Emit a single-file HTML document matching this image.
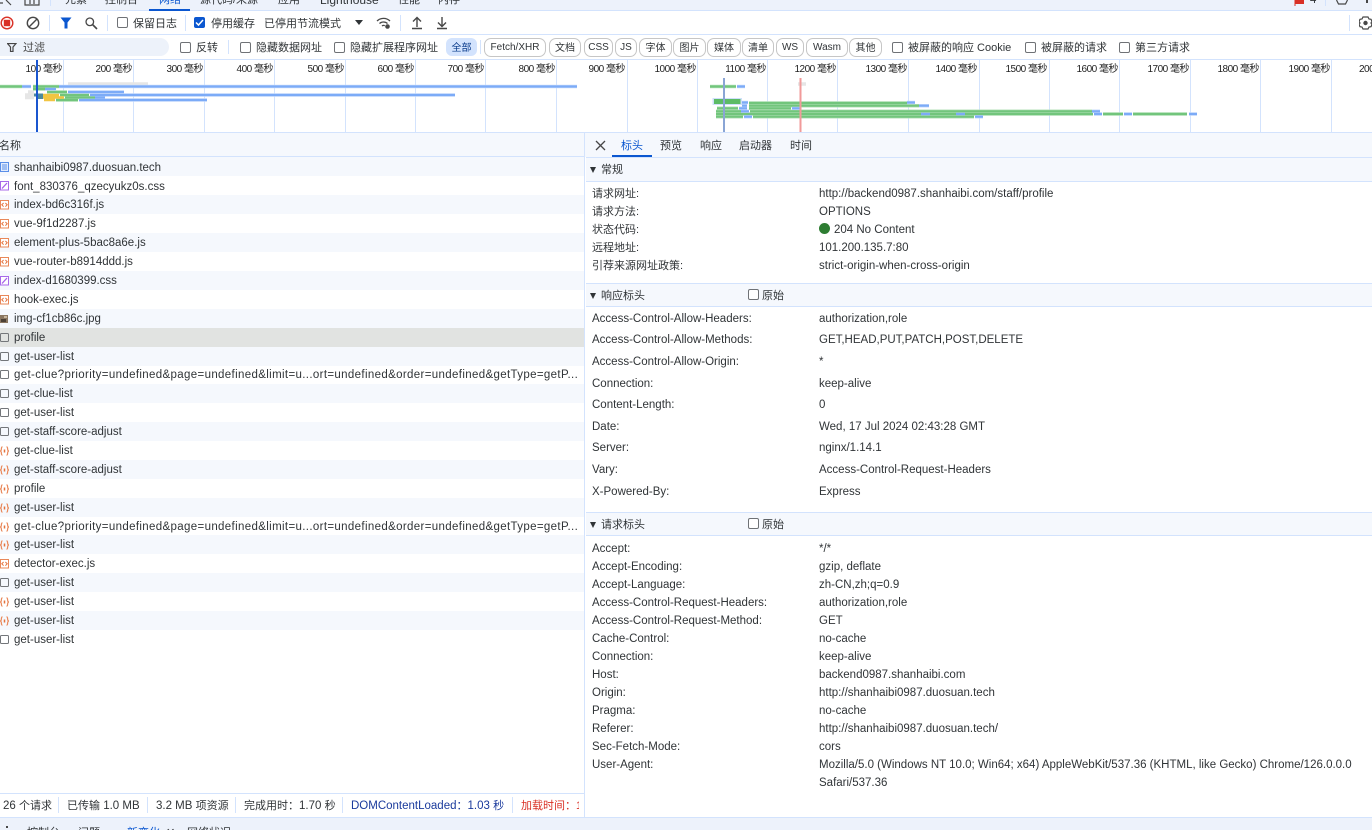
<!DOCTYPE html>
<html lang="zh-CN"><head><meta charset="utf-8"><title>Network</title>
<style>
html,body{margin:0;padding:0;background:#fff}
#a{position:relative;width:1372px;height:830px;overflow:hidden;background:#fff;font:11.5px/14px "Liberation Sans","Noto Sans CJK SC",sans-serif;color:#303437}
.t{position:absolute;white-space:pre;line-height:16px}
.c{font-size:11px;line-height:14px}
i.z{font-style:normal;font-size:11px}
.b{position:absolute}
.cb{position:absolute;width:9px;height:9px;border:1px solid #6f7276;border-radius:2px;background:#fff}
.sp{position:absolute;width:1px;background:#d3e3fd}
.chip{position:absolute;top:38px;height:17px;border:1px solid #c6c6c6;border-radius:7px;text-align:center;line-height:18px;font-size:10px;box-sizing:content-box;background:#fff;white-space:pre}
.gl{position:absolute;top:60px;height:72px;width:1px;background:#d3e3fd}
.tk{position:absolute;top:63px;width:60px;text-align:right;white-space:pre;line-height:14px;font-size:10px;letter-spacing:-.5px;color:#1f1f1f}
.r{position:absolute;left:0;width:584px;height:19px}
.r svg{position:absolute;left:0;top:5px}
.r span{position:absolute;left:14px;top:3px;white-space:pre;line-height:14px}
.o{background:#f5f8fd}
.sec{position:absolute;left:586px;right:0;height:24px;background:#f5f8fd;border-top:1px solid #d3e3fd;border-bottom:1px solid #d3e3fd;box-sizing:border-box}
.tri{position:absolute;left:590px;width:0;height:0;border-left:3.5px solid transparent;border-right:3.5px solid transparent;border-top:6px solid #303437}
</style></head><body><div id="a">
<svg width="0" height="0" style="position:absolute"><defs>
<symbol id="doc" viewBox="0 0 9 10"><rect x=".5" y=".5" width="8" height="9" fill="#e3edfd" stroke="#5b8fe8"/><path d="M2 3h5M2 5h5M2 7h5" stroke="#5b8fe8"/></symbol>
<symbol id="css" viewBox="0 0 9 10"><rect x=".5" y=".5" width="8" height="8.500" fill="#fff" stroke="#a86bea"/><path d="M2 7.500L7 2" stroke="#a45ee8" stroke-width="1.300"/></symbol>
<symbol id="js" viewBox="0 0 9 10"><rect x=".5" y=".5" width="8" height="8.500" fill="#fff" stroke="#e9885a"/><path d="M3.600 3L1.800 4.800l1.800 1.800M5.400 3l1.800 1.800-1.800 1.800" fill="none" stroke="#e5723c"/></symbol>
<symbol id="em" viewBox="0 0 9 10"><rect x=".5" y=".5" width="8" height="8" rx="1" fill="none" stroke="#73767a"/></symbol>
<symbol id="fe" viewBox="0 0 9 10"><path d="M2.500 .8C1 .8 1.600 3 1.200 4c-.2.600-.8 1-.8 1s.6.400.8 1c.4 1-.2 3.200 1.300 3.200M6.500 .8C8 .8 7.400 3 7.800 4c.2.600.8 1 .8 1s-.6.400-.8 1c-.4 1 .2 3.200-1.300 3.200" fill="none" stroke="#e9885a" stroke-width="1.200"/><path d="M4.500 3.500v3" stroke="#e5723c" stroke-width="1.500"/></symbol>
</defs></svg>

<!-- top tabs -->
<div class="b" style="left:0;top:0;width:1372px;height:11px;background:#edf2fb;border-bottom:1px solid #d3e3fd;box-sizing:border-box;overflow:hidden">
<span class="t c" style="left:65px;top:-7px">元素</span>
<span class="t c" style="left:105px;top:-7px">控制台</span>
<span class="t c" style="left:159px;top:-7px;color:#0b57d0">网络</span>
<span class="t c" style="left:200px;top:-7px">源代码/来源</span>
<span class="t c" style="left:278px;top:-7px">应用</span>
<span class="t" style="left:320px;top:-8px;font-size:12px">Lighthouse</span>
<span class="t c" style="left:398px;top:-7px">性能</span>
<span class="t c" style="left:438px;top:-7px">内存</span>
<span class="t" style="left:1310px;top:-8px">4</span>
</div>
<div class="b" style="left:149px;top:9px;width:41px;height:2px;background:#0b57d0"></div>
<svg class="b" style="left:0;top:0" width="60" height="10"><path d="M0 3h3M6 0l5 5M25 0v5h14V0M30 0v4M34 0v4" stroke="#474747" stroke-width="1.200" fill="none"/></svg>
<div class="sp" style="left:50px;top:0;height:6px"></div>
<svg class="b" style="left:1294px;top:0" width="12" height="6"><rect x="1" y="0" width="9" height="4" fill="#d93025"/><path d="M1 0v6" stroke="#d93025"/></svg>
<div class="sp" style="left:1325px;top:0;height:6px"></div>
<svg class="b" style="left:1335px;top:0" width="14" height="6"><path d="M1.500 0l2 4h7l2-4" stroke="#474747" stroke-width="1.200" fill="none"/></svg>
<div class="b" style="left:1366px;top:0;width:2px;height:3px;background:#474747"></div>

<!-- toolbar -->
<div class="b" style="left:0;top:34px;width:1372px;height:1px;background:#d3e3fd"></div>
<svg class="b" style="left:0;top:15px" width="15" height="16"><circle cx="7" cy="8" r="5.800" fill="none" stroke="#d93025" stroke-width="1.400"/><rect x="3.800" y="4.800" width="6.400" height="6.400" fill="#d93025"/></svg>
<svg class="b" style="left:26px;top:16px" width="14" height="14"><circle cx="7" cy="7" r="5.700" fill="none" stroke="#474747" stroke-width="1.400"/><path d="M3 11L11 3" stroke="#474747" stroke-width="1.400"/></svg>
<div class="sp" style="left:49px;top:15px;height:16px"></div>
<svg class="b" style="left:60px;top:17px" width="13" height="12"><path d="M.5 .5h11L7.500 5.500V11.500H4.500V5.500z" fill="#0b57d0"/></svg>
<svg class="b" style="left:84px;top:16px" width="14" height="14"><circle cx="5.800" cy="5.800" r="3.800" fill="none" stroke="#474747" stroke-width="1.300"/><path d="M8.500 8.500l4.500 4.500" stroke="#474747" stroke-width="1.600"/></svg>
<div class="sp" style="left:107px;top:15px;height:16px"></div>
<div class="cb" style="left:117px;top:17px"></div>
<span class="t c" style="left:133px;top:17px">保留日志</span>
<div class="sp" style="left:185px;top:15px;height:16px"></div>
<div class="b" style="left:194px;top:17px;width:11px;height:11px;background:#0b57d0;border-radius:2px"></div>
<svg class="b" style="left:194px;top:17px" width="11" height="11"><path d="M2 5.500l2.500 2.500L9 3" fill="none" stroke="#fff" stroke-width="1.500"/></svg>
<span class="t c" style="left:211px;top:17px">停用缓存</span>
<span class="t c" style="left:264px;top:17px">已停用节流模式</span>
<div class="b" style="left:355px;top:20px;width:0;height:0;border-left:4px solid transparent;border-right:4px solid transparent;border-top:5px solid #303437"></div>
<svg class="b" style="left:376px;top:16px" width="16" height="14"><path d="M1 5c3.500-3.500 9.500-3.500 13 0M3.500 7.500c2.200-2 5.800-2 8 0M6 10c.8-.6 2-.7 2.800-.3" fill="none" stroke="#474747" stroke-width="1.300"/><circle cx="11.500" cy="10.500" r="2.300" fill="#474747"/></svg>
<div class="sp" style="left:400px;top:15px;height:16px"></div>
<svg class="b" style="left:411px;top:16px" width="12" height="14"><path d="M6 11V2M2 5.500L6 1.500l4 4M1 12.500h10" fill="none" stroke="#474747" stroke-width="1.400"/></svg>
<svg class="b" style="left:436px;top:16px" width="12" height="14"><path d="M6 1v9M2 6.500l4 4 4-4M1 12.500h10" fill="none" stroke="#474747" stroke-width="1.400"/></svg>
<div class="sp" style="left:1349px;top:15px;height:16px"></div>
<svg class="b" style="left:1359px;top:16px" width="13" height="14"><path d="M4 1h5l1 2 2 .3 1 2-1 1.700 1 1.700-1 2-2 .3-1 2H4l-1-2-2-.3-1-2 1-1.700-1-1.700 1-2 2-.3z" fill="none" stroke="#474747" stroke-width="1.200"/><circle cx="6.500" cy="7" r="2.200" fill="#474747"/></svg>

<!-- filter row -->
<div class="b" style="left:0;top:59px;width:1372px;height:1px;background:#d3e3fd"></div>
<div class="b" style="left:-10px;top:38px;width:179px;height:18px;background:#edf2fa;border-radius:9px"></div>
<svg class="b" style="left:7px;top:43px" width="10" height="9"><path d="M.5 .5h8.500L6 4v4.500H3.500V4z" fill="none" stroke="#474747" stroke-width="1.200"/></svg>
<span class="t c" style="left:23px;top:41px;color:#474747">过滤</span>
<div class="cb" style="left:180px;top:42px"></div><span class="t c" style="left:196px;top:41px">反转</span>
<div class="sp" style="left:228px;top:40px;height:14px"></div>
<div class="cb" style="left:240px;top:42px"></div><span class="t c" style="left:256px;top:41px">隐藏数据网址</span>
<div class="cb" style="left:334px;top:42px"></div><span class="t c" style="left:350px;top:41px">隐藏扩展程序网址</span>
<div class="b" style="left:446px;top:38px;width:31px;height:18px;background:#d3e3fd;border-radius:6px;text-align:center;line-height:21px;font-size:10px;color:#0b3c8c">全部</div>
<div class="sp" style="left:480px;top:40px;height:14px"></div>
<div class="chip" style="left:484px;width:60px">Fetch/XHR</div>
<div class="chip" style="left:549px;width:30px;line-height:19px">文档</div>
<div class="chip" style="left:584px;width:27px">CSS</div>
<div class="chip" style="left:615px;width:20px">JS</div>
<div class="chip" style="left:639px;width:31px;line-height:19px">字体</div>
<div class="chip" style="left:673px;width:31px;line-height:19px">图片</div>
<div class="chip" style="left:707px;width:32px;line-height:19px">媒体</div>
<div class="chip" style="left:742px;width:30px;line-height:19px">清单</div>
<div class="chip" style="left:776px;width:26px">WS</div>
<div class="chip" style="left:806px;width:40px">Wasm</div>
<div class="chip" style="left:849px;width:31px;line-height:19px">其他</div>
<div class="cb" style="left:892px;top:42px"></div><span class="t c" style="left:908px;top:41px">被屏蔽的响应 Cookie</span>
<div class="cb" style="left:1025px;top:42px"></div><span class="t c" style="left:1041px;top:41px">被屏蔽的请求</span>
<div class="cb" style="left:1119px;top:42px"></div><span class="t c" style="left:1135px;top:41px">第三方请求</span>

<!-- timeline -->
<div class="gl" style="left:63px"></div><div class="gl" style="left:133px"></div><div class="gl" style="left:204px"></div><div class="gl" style="left:274px"></div><div class="gl" style="left:345px"></div><div class="gl" style="left:415px"></div><div class="gl" style="left:485px"></div><div class="gl" style="left:556px"></div><div class="gl" style="left:627px"></div><div class="gl" style="left:697px"></div><div class="gl" style="left:767px"></div><div class="gl" style="left:837px"></div><div class="gl" style="left:908px"></div><div class="gl" style="left:979px"></div><div class="gl" style="left:1049px"></div><div class="gl" style="left:1119px"></div><div class="gl" style="left:1190px"></div><div class="gl" style="left:1260px"></div><div class="gl" style="left:1331px"></div>
<span class="tk" style="left:2px">100 毫秒</span><span class="tk" style="left:72px">200 毫秒</span><span class="tk" style="left:143px">300 毫秒</span><span class="tk" style="left:213px">400 毫秒</span><span class="tk" style="left:284px">500 毫秒</span><span class="tk" style="left:354px">600 毫秒</span><span class="tk" style="left:424px">700 毫秒</span><span class="tk" style="left:495px">800 毫秒</span><span class="tk" style="left:565px">900 毫秒</span><span class="tk" style="left:636px">1000 毫秒</span><span class="tk" style="left:706px">1100 毫秒</span><span class="tk" style="left:776px">1200 毫秒</span><span class="tk" style="left:847px">1300 毫秒</span><span class="tk" style="left:917px">1400 毫秒</span><span class="tk" style="left:987px">1500 毫秒</span><span class="tk" style="left:1058px">1600 毫秒</span><span class="tk" style="left:1129px">1700 毫秒</span><span class="tk" style="left:1199px">1800 毫秒</span><span class="tk" style="left:1270px">1900 毫秒</span><span class="tk" style="left:1359px;width:auto">200</span>
<svg class="b" style="left:0;top:60px" width="1372" height="72">
<g stroke-width="3.500" fill="none">
<g stroke="#e6e6e6"><path d="M68 24h80M25 35h9M25 37.500h9M28 32h6M798 24h8"/></g>
<g stroke="#b5e1b9"><path d="M0 26.500h22M33 26.500h26M33 29h12M47 32h20M60 35h29M65 37.500h30M56 40h22M710 26.500h26M749 43h158M749 45.700h170M717 48.300h21M749 48.300h42M716 51.300h25M750 51.300h342M716 54h377M1103 54h20M1133 54h54M716 56.700h27M753 56.700h221"/></g>
<g stroke="#c7dbfc"><path d="M22 26.500h9M59 26.500h518M45 29h11M68 32h56M90 35h365M95 37.500h10M79 40h128M737 26.500h8M741 42.500h7M907 42.500h8M742 45.700h5M919 45.700h10M739 48.300h8M792 48.300h8M741 51.300h8M1092 51.300h8M921 54h9M956 54h9M1094 54h8M1124 54h8M1189 54h8M744 56.700h8M975 56.700h8"/></g>
</g>
<g stroke-width="2.200" fill="none">
<g stroke="#72c57c"><path d="M0 26.500h22M33 26.500h26M33 29h12M47 32h20M60 35h29M65 37.500h30M56 40h22M710 26.500h26M749 43h158M749 45.700h170M717 48.300h21M749 48.300h42M716 51.300h25M750 51.300h342M716 54h377M1103 54h20M1133 54h54M716 56.700h27M753 56.700h221"/></g>
<g stroke="#7cabf7"><path d="M22 26.500h9M59 26.500h518M45 29h11M68 32h56M90 35h365M95 37.500h10M79 40h128M737 26.500h8M741 42.500h7M907 42.500h8M742 45.700h5M919 45.700h10M739 48.300h8M792 48.300h8M741 51.300h8M1092 51.300h8M921 54h9M956 54h9M1094 54h8M1124 54h8M1189 54h8M744 56.700h8M975 56.700h8"/></g>
</g>
<path d="M34 35h9M36 37.500h7" stroke="#4d8a9c" stroke-width="3"/>
<path d="M43 35h16M43 37.500h21M44 40h11" stroke="#f1c542" stroke-width="2.500"/>
<rect x="712.500" y="38" width="29.500" height="7" fill="#cfe0fb"/><rect x="714" y="39" width="26.500" height="5" fill="#5cbb66"/>
<rect x="36" y="0" width="2" height="72" fill="#1a56cf"/>
<rect x="723" y="18" width="2" height="54" fill="#8aa5d5"/>
<rect x="799.500" y="18" width="2" height="54" fill="#f19a9a"/>
</svg>
<div class="b" style="left:0;top:132px;width:1372px;height:1px;background:#d3e3fd"></div>

<!-- left header -->
<div class="b" style="left:0;top:133px;width:584px;height:23px;background:#f5f8fd;border-bottom:1px solid #d3e3fd"></div>
<span class="t c" style="left:-1px;top:139px">名称</span>
<div class="b" style="left:584px;top:132px;width:1px;height:685px;background:#d3e3fd"></div>

<!-- rows -->
<div class="r o" style="top:157px"><svg width="9" height="10"><use href="#doc"/></svg><span style="top:4px">shanhaibi0987.duosuan.tech</span></div>
<div class="r" style="top:176px"><svg width="9" height="10"><use href="#css"/></svg><span style="top:4px">font_830376_qzecyukz0s.css</span></div>
<div class="r o" style="top:195px"><svg width="9" height="10"><use href="#js"/></svg><span>index-bd6c316f.js</span></div>
<div class="r" style="top:214px"><svg width="9" height="10"><use href="#js"/></svg><span>vue-9f1d2287.js</span></div>
<div class="r o" style="top:233px"><svg width="9" height="10"><use href="#js"/></svg><span>element-plus-5bac8a6e.js</span></div>
<div class="r" style="top:252px"><svg width="9" height="10"><use href="#js"/></svg><span>vue-router-b8914ddd.js</span></div>
<div class="r o" style="top:271px"><svg width="9" height="10"><use href="#css"/></svg><span>index-d1680399.css</span></div>
<div class="r" style="top:290px"><svg width="9" height="10"><use href="#js"/></svg><span>hook-exec.js</span></div>
<div class="r o" style="top:309px"><svg width="9" height="10"><rect width="8" height="8" y="1" fill="#8a7660"/><rect x="1" y="5" width="5" height="3" fill="#4b4036"/><rect x="4" y="2" width="3" height="2" fill="#c9b79f"/></svg><span>img-cf1cb86c.jpg</span></div>
<div class="r" style="top:328px;background:#e1e3e1"><svg width="9" height="10"><use href="#em"/></svg><span>profile</span></div>
<div class="r o" style="top:347px"><svg width="9" height="10"><use href="#em"/></svg><span>get-user-list</span></div>
<div class="r" style="top:365px"><svg width="9" height="10"><use href="#em"/></svg><span style="letter-spacing:.35px">get-clue?priority=undefined&amp;page=undefined&amp;limit=u...ort=undefined&amp;order=undefined&amp;getType=getP...</span></div>
<div class="r o" style="top:384px"><svg width="9" height="10"><use href="#em"/></svg><span>get-clue-list</span></div>
<div class="r" style="top:403px"><svg width="9" height="10"><use href="#em"/></svg><span>get-user-list</span></div>
<div class="r o" style="top:422px"><svg width="9" height="10"><use href="#em"/></svg><span>get-staff-score-adjust</span></div>
<div class="r" style="top:441px"><svg width="9" height="10"><use href="#fe"/></svg><span>get-clue-list</span></div>
<div class="r o" style="top:460px"><svg width="9" height="10"><use href="#fe"/></svg><span>get-staff-score-adjust</span></div>
<div class="r" style="top:479px"><svg width="9" height="10"><use href="#fe"/></svg><span>profile</span></div>
<div class="r o" style="top:498px"><svg width="9" height="10"><use href="#fe"/></svg><span>get-user-list</span></div>
<div class="r" style="top:517px"><svg width="9" height="10"><use href="#fe"/></svg><span style="letter-spacing:.35px">get-clue?priority=undefined&amp;page=undefined&amp;limit=u...ort=undefined&amp;order=undefined&amp;getType=getP...</span></div>
<div class="r o" style="top:535px"><svg width="9" height="10"><use href="#fe"/></svg><span>get-user-list</span></div>
<div class="r" style="top:554px"><svg width="9" height="10"><use href="#js"/></svg><span>detector-exec.js</span></div>
<div class="r o" style="top:573px"><svg width="9" height="10"><use href="#em"/></svg><span>get-user-list</span></div>
<div class="r" style="top:592px"><svg width="9" height="10"><use href="#fe"/></svg><span>get-user-list</span></div>
<div class="r o" style="top:611px"><svg width="9" height="10"><use href="#fe"/></svg><span>get-user-list</span></div>
<div class="r" style="top:630px"><svg width="9" height="10"><use href="#em"/></svg><span>get-user-list</span></div>

<!-- status bar -->
<div class="b" style="left:0;top:793px;width:584px;height:1px;background:#d3e3fd"></div>
<span class="t" style="left:3px;top:798px">26 <i class="z">个请求</i></span>
<div class="sp" style="left:58px;top:797px;height:16px"></div>
<span class="t" style="left:67px;top:798px"><i class="z">已传输</i> 1.0 MB</span>
<div class="sp" style="left:147px;top:797px;height:16px"></div>
<span class="t" style="left:156px;top:798px">3.2 MB <i class="z">项资源</i></span>
<div class="sp" style="left:235px;top:797px;height:16px"></div>
<span class="t" style="left:244px;top:798px"><i class="z">完成用时：</i>1.70 <i class="z">秒</i></span>
<div class="sp" style="left:342px;top:797px;height:16px"></div>
<span class="t" style="left:351px;top:798px;color:#1a3a9c">DOMContentLoaded<i class="z">：</i>1.03 <i class="z">秒</i></span>
<div class="sp" style="left:512px;top:797px;height:16px"></div>
<span class="t c" style="left:521px;top:799px;color:#d93025;width:58px;overflow:hidden">加载时间：1.78</span>

<!-- bottom drawer -->
<div class="b" style="left:0;top:817px;width:1372px;height:13px;background:#edf2fb;border-top:1px solid #d3e3fd;box-sizing:border-box;overflow:hidden">
<div class="b" style="left:6px;top:8px;width:2px;height:2px;background:#474747;box-shadow:0 4px 0 #474747"></div>
<span class="t c" style="left:27px;top:8px">控制台</span>
<span class="t c" style="left:78px;top:8px">问题</span>
<span class="t c" style="left:127px;top:8px;color:#0b57d0">新变化</span>
<span class="t c" style="left:166px;top:8px">✕</span>
<span class="t c" style="left:187px;top:8px">网络状况</span>
</div>

<!-- detail tabs -->
<div class="b" style="left:585px;top:133px;width:787px;height:24px;background:#f5f8fd"></div>
<svg class="b" style="left:595px;top:140px" width="11" height="11"><path d="M1 1l9 9M10 1l-9 9" stroke="#474747" stroke-width="1.300"/></svg>
<span class="t c" style="left:621px;top:139px;color:#0b57d0">标头</span>
<span class="t c" style="left:660px;top:139px">预览</span>
<span class="t c" style="left:700px;top:139px">响应</span>
<span class="t c" style="left:739px;top:139px">启动器</span>
<span class="t c" style="left:790px;top:139px">时间</span>
<div class="b" style="left:612px;top:155px;width:40px;height:2px;background:#0b57d0"></div>

<!-- sections -->
<div class="sec" style="top:157px;border-top:1px solid #d3e3fd;height:25px"></div>
<div class="tri" style="top:167px"></div><span class="t c" style="left:601px;top:163px">常规</span>
<span class="t c" style="left:592px;top:187px">请求网址:</span><span class="t" style="left:819px;top:186px">http://backend0987.shanhaibi.com/staff/profile</span>
<span class="t c" style="left:592px;top:205px">请求方法:</span><span class="t" style="left:819px;top:204px">OPTIONS</span>
<span class="t c" style="left:592px;top:223px">状态代码:</span><div class="b" style="left:819px;top:223px;width:11px;height:11px;border-radius:50%;background:#2e7d32"></div><span class="t" style="left:834px;top:222px">204 No Content</span>
<span class="t c" style="left:592px;top:241px">远程地址:</span><span class="t" style="left:819px;top:240px">101.200.135.7:80</span>
<span class="t c" style="left:592px;top:259px">引荐来源网址政策:</span><span class="t" style="left:819px;top:258px">strict-origin-when-cross-origin</span>

<div class="sec" style="top:283px"></div>
<div class="tri" style="top:293px"></div><span class="t c" style="left:601px;top:289px">响应标头</span>
<div class="cb" style="left:748px;top:289px"></div><span class="t c" style="left:762px;top:289px">原始</span>
<span class="t" style="left:592px;top:311px">Access-Control-Allow-Headers:</span><span class="t" style="left:819px;top:311px">authorization,role</span>
<span class="t" style="left:592px;top:332px">Access-Control-Allow-Methods:</span><span class="t" style="left:819px;top:332px">GET,HEAD,PUT,PATCH,POST,DELETE</span>
<span class="t" style="left:592px;top:354px">Access-Control-Allow-Origin:</span><span class="t" style="left:819px;top:354px">*</span>
<span class="t" style="left:592px;top:376px">Connection:</span><span class="t" style="left:819px;top:376px">keep-alive</span>
<span class="t" style="left:592px;top:397px">Content-Length:</span><span class="t" style="left:819px;top:397px">0</span>
<span class="t" style="left:592px;top:419px">Date:</span><span class="t" style="left:819px;top:419px">Wed, 17 Jul 2024 02:43:28 GMT</span>
<span class="t" style="left:592px;top:440px">Server:</span><span class="t" style="left:819px;top:440px">nginx/1.14.1</span>
<span class="t" style="left:592px;top:462px">Vary:</span><span class="t" style="left:819px;top:462px">Access-Control-Request-Headers</span>
<span class="t" style="left:592px;top:484px">X-Powered-By:</span><span class="t" style="left:819px;top:484px">Express</span>

<div class="sec" style="top:512px"></div>
<div class="tri" style="top:522px"></div><span class="t c" style="left:601px;top:518px">请求标头</span>
<div class="cb" style="left:748px;top:518px"></div><span class="t c" style="left:762px;top:518px">原始</span>
<span class="t" style="left:592px;top:541px">Accept:</span><span class="t" style="left:819px;top:541px">*/*</span>
<span class="t" style="left:592px;top:559px">Accept-Encoding:</span><span class="t" style="left:819px;top:559px">gzip, deflate</span>
<span class="t" style="left:592px;top:577px">Accept-Language:</span><span class="t" style="left:819px;top:577px">zh-CN,zh;q=0.9</span>
<span class="t" style="left:592px;top:595px">Access-Control-Request-Headers:</span><span class="t" style="left:819px;top:595px">authorization,role</span>
<span class="t" style="left:592px;top:613px">Access-Control-Request-Method:</span><span class="t" style="left:819px;top:613px">GET</span>
<span class="t" style="left:592px;top:631px">Cache-Control:</span><span class="t" style="left:819px;top:631px">no-cache</span>
<span class="t" style="left:592px;top:649px">Connection:</span><span class="t" style="left:819px;top:649px">keep-alive</span>
<span class="t" style="left:592px;top:667px">Host:</span><span class="t" style="left:819px;top:667px">backend0987.shanhaibi.com</span>
<span class="t" style="left:592px;top:685px">Origin:</span><span class="t" style="left:819px;top:685px">http://shanhaibi0987.duosuan.tech</span>
<span class="t" style="left:592px;top:703px">Pragma:</span><span class="t" style="left:819px;top:703px">no-cache</span>
<span class="t" style="left:592px;top:721px">Referer:</span><span class="t" style="left:819px;top:721px">http://shanhaibi0987.duosuan.tech/</span>
<span class="t" style="left:592px;top:739px">Sec-Fetch-Mode:</span><span class="t" style="left:819px;top:739px">cors</span>
<span class="t" style="left:592px;top:757px">User-Agent:</span><span class="t" style="left:819px;top:757px">Mozilla/5.0 (Windows NT 10.0; Win64; x64) AppleWebKit/537.36 (KHTML, like Gecko) Chrome/126.0.0.0</span>
<span class="t" style="left:819px;top:775px">Safari/537.36</span>
</div></body></html>
